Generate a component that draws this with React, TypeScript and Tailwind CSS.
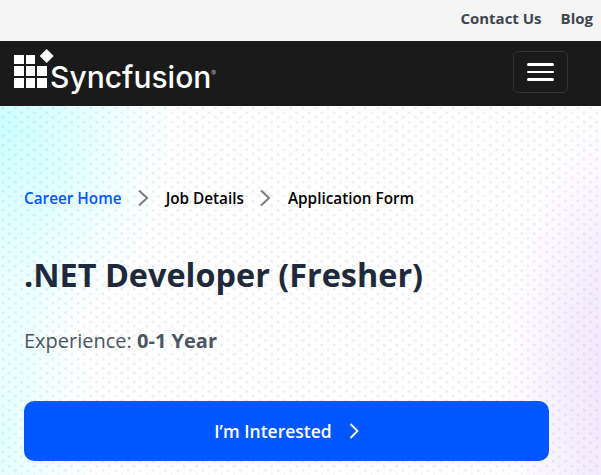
export default function App() {
  const Chevron = ({ className }: { className: string }) => (
    <svg viewBox="0 0 12 18" fill="none" className={className}>
      <path d="M2 1.5 10 9 2 16.5" stroke="currentColor" strokeWidth="2" />
    </svg>
  );
  return (
    <div className="h-[475px] w-[601px] overflow-hidden bg-white font-['Open_Sans',sans-serif]">
      <div className="flex h-[41px] items-center justify-end gap-[19px] bg-[#f5f5f5] pb-[4px] pr-2 text-[15px] font-bold text-[#3f4650]">
        <span>Contact Us</span>
        <span>Blog</span>
      </div>
      <header className="flex h-[65px] items-center justify-between bg-[#1a1a1a] pl-[14px] pr-[33px]">
        <div className="relative h-[65px] w-[200px]">
          <svg viewBox="0 0 40 40" className="absolute left-0 top-[7px] h-[40px] w-[40px] overflow-visible" fill="#fff">
            <rect x="0" y="7" width="10" height="9" />
            <rect x="12" y="7" width="9" height="9" />
            <rect x="0" y="18" width="10" height="10" />
            <rect x="12" y="18" width="9" height="10" />
            <rect x="23" y="18" width="10" height="10" />
            <rect x="0" y="30" width="10" height="10" />
            <rect x="12" y="30" width="9" height="10" />
            <rect x="23" y="30" width="10" height="10" />
            <path d="M32.7 1 39.7 8 32.7 15 25.7 8Z" />
          </svg>
          <span className="absolute left-[36px] top-[14px] font-['Inter',sans-serif] text-[30px] font-medium leading-[44px] text-white">
            Syncfusion
            <span className="align-[12px] text-[7px] font-normal leading-none tracking-normal text-[#bbb]">®</span>
          </span>
        </div>
        <button className="mb-[4px] flex h-[42px] w-[55px] flex-col items-center justify-center gap-[5px] rounded-[5px] border border-[#333333]">
          <span className="h-[3px] w-[27px] rounded-full bg-white" />
          <span className="h-[2px] w-[27px] rounded-full bg-white" />
          <span className="h-[3px] w-[27px] rounded-full bg-white" />
        </button>
      </header>
      <main className="relative h-[369px] overflow-hidden bg-white px-6">
        <div className="absolute inset-0 bg-[radial-gradient(ellipse_170px_220px_at_0px_20px,#ccffff_0%,#dcffff_35%,#ffffff00_100%),radial-gradient(ellipse_90px_300px_at_0px_330px,#e2ffff_0%,#ffffff00_100%),radial-gradient(ellipse_120px_280px_at_620px_280px,#f1e6ff_0%,#f6efff_50%,#ffffff00_100%)]" />
        <div className="absolute inset-0 bg-[radial-gradient(circle_at_3px_2px,#00000016_0,#0000000f_1.1px,transparent_1.7px),radial-gradient(circle_at_9.25px_6.65px,#00000016_0,#0000000f_1.1px,transparent_1.7px)] bg-[size:12.5px_9.3px]" />
        <div className="relative">
          <nav className="mt-[82px] flex h-[20px] items-center text-[15.3px] font-semibold text-black">
            <span className="text-[#0057ff]">Career Home</span>
            <Chevron className="ml-[15px] mr-[17px] h-[18px] w-[12px] text-[#7d7d7d]" />
            <span>Job Details</span>
            <Chevron className="ml-[15px] mr-[17px] h-[18px] w-[12px] text-[#7d7d7d]" />
            <span>Application Form</span>
          </nav>
          <h1 className="mt-[45px] text-[32.4px] font-bold leading-[42px] text-[#1e293b]">.NET Developer (Fresher)</h1>
          <p className="mt-[32px] text-[20px] leading-[28px] text-[#4b5563]">
            Experience: <span className="font-bold">0-1 Year</span>
          </p>
          <button className="mt-[46px] flex h-[60px] w-[525px] items-center justify-center rounded-[10px] bg-[#0057ff] text-[17.5px] font-semibold text-white">
            <span>I’m Interested</span>
            <svg viewBox="0 0 10 16" fill="none" className="ml-[17px] h-[16px] w-[10px]">
              <path d="M1.5 1 8.5 8 1.5 15" stroke="currentColor" strokeWidth="1.8" />
            </svg>
          </button>
        </div>
      </main>
    </div>
  );
}
